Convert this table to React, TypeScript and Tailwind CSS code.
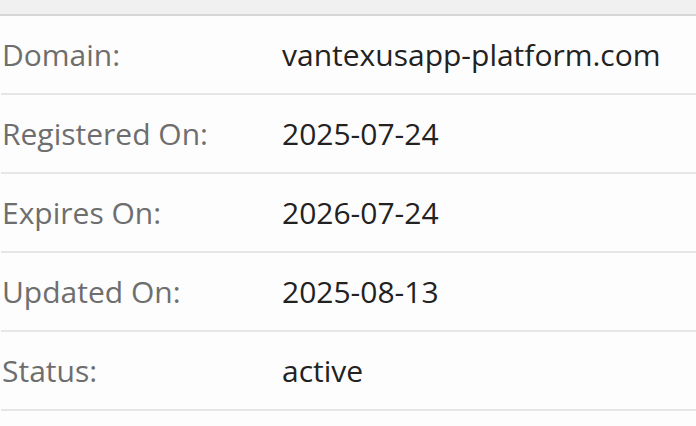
import React from 'react';

const rows = [
  { label: 'Domain:', value: 'vantexusapp-platform.com' },
  { label: 'Registered On:', value: '2025-07-24' },
  { label: 'Expires On:', value: '2026-07-24' },
  { label: 'Updated On:', value: '2025-08-13' },
  { label: 'Status:', value: 'active' },
];

const App = () => {
  return (
    <div className="min-h-screen bg-[#fdfdfd] font-['Open_Sans',sans-serif]">
      <div className="h-[14px] bg-[#f0f0f0] border-b-2 border-[#d6d6d6] box-content" />
      <div className="pl-px">
        {rows.map((row) => (
          <div key={row.label} className="flex items-center h-[79px] border-b-2 border-[#e6e6e6]">
            <div className="w-[281px] pl-px text-[30px] text-[#6e6e6e]">{row.label}</div>
            <div className="text-[30px] text-[#222222]">{row.value}</div>
          </div>
        ))}
      </div>
    </div>
  );
};

export default App;
